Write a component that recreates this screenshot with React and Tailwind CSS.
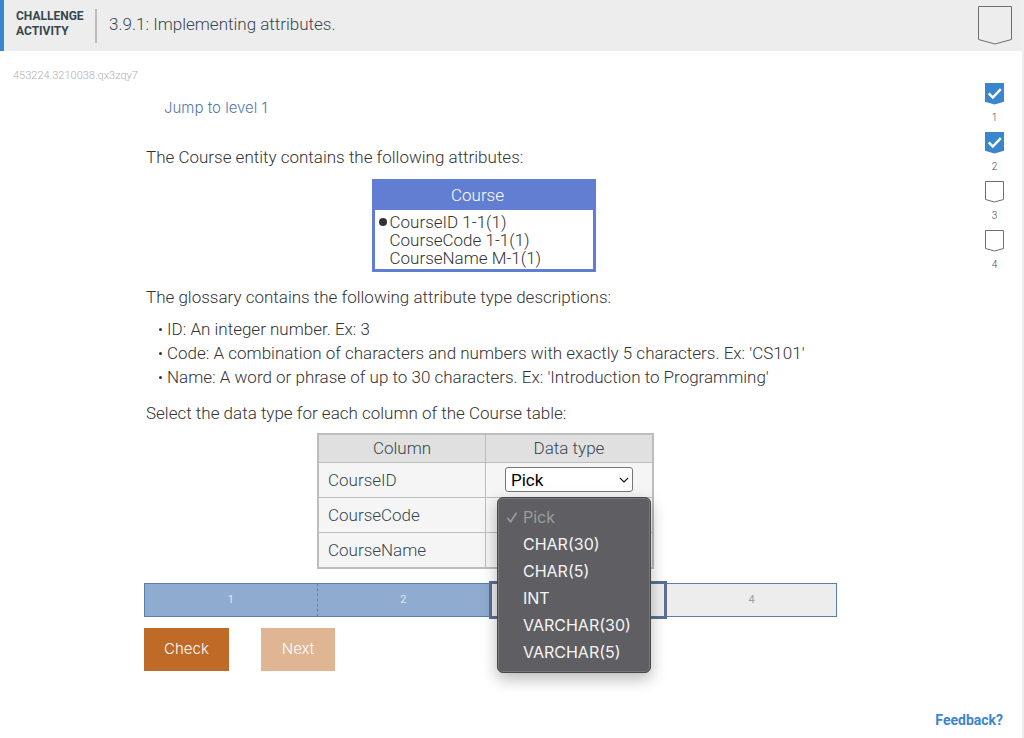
import React, { useState } from "react";

const OPTIONS = ["Pick", "CHAR(30)", "CHAR(5)", "INT", "VARCHAR(30)", "VARCHAR(5)"];
const COLUMNS = ["CourseID", "CourseCode", "CourseName"];
const LEVELS = [
  { level: 1, done: true },
  { level: 2, done: true },
  { level: 3, done: false },
  { level: 4, done: false },
];

function LevelBadge({ level, done }) {
  return (
    <li className="flex h-[49px] flex-col items-center">
      <svg width="19" height="23" viewBox="0 0 19 23" fill="none" aria-hidden="true">
        {done ? (
          <>
            <path d="M0 1h19v18.8L9.5 22.5 0 19.8z" fill="#3a86cc" />
            <path d="M3.8 11.4l4 4.2 8-8.4" stroke="#fff" strokeWidth="2.4" />
          </>
        ) : (
          <path d="M0.5 1.5h18v18L9.5 22l-9-2.5z" stroke="#6e6e6e" fill="#fff" />
        )}
      </svg>
      <span className="mt-[5px] text-[10px] leading-4 text-[#37474f]">{level}</span>
    </li>
  );
}

function TypeSelect({ id, value, onChange }) {
  return (
    <div className="relative mx-auto h-[25px] w-32">
      <select
        id={id}
        value={value}
        onChange={(e) => onChange(e.target.value)}
        className="block h-full w-full appearance-none rounded-[3px] border border-[#767676] bg-white pl-[5px] text-[17px] leading-5 font-normal text-black"
      >
        {OPTIONS.map((o) => (
          <option key={o}>{o}</option>
        ))}
      </select>
      <svg className="pointer-events-none absolute top-[9px] right-1" width="10" height="8" viewBox="0 0 10 8" fill="none" aria-hidden="true">
        <path d="M0.8 1.8L5 6l4.2-4.2" stroke="#111" strokeWidth="1.2" />
      </svg>
    </div>
  );
}

function OptionMenu({ value, onPick }) {
  return (
    <ul
      role="listbox"
      aria-label="Data type options"
      className="absolute top-[34px] left-[11px] z-10 w-[154px] rounded-md border border-[#48484a] bg-[#5f5f63] py-1.5 font-['Inter',sans-serif] text-base leading-5 shadow-[0_6px_16px_rgba(0,0,0,0.28)] inset-ring inset-ring-[#77777a]"
    >
      {OPTIONS.map((o) => {
        const selected = o === value;
        return (
          <li key={o} role="option" aria-selected={selected}>
            <button
              type="button"
              onClick={() => onPick(o)}
              className={
                selected
                  ? "flex h-[27px] w-full items-center pl-2 font-normal text-[#9c9c9f]"
                  : "flex h-[27px] w-full items-center pl-2 font-normal text-[#f5f5f5]"
              }
            >
              <span className="w-[17px]">
                {selected && (
                  <svg width="12" height="12" viewBox="0 0 12 12" fill="none" aria-hidden="true">
                    <path d="M1.8 7.4l2.8 3.4L10.2 2.2" stroke="currentColor" strokeWidth="1.6" strokeLinecap="round" strokeLinejoin="round" />
                  </svg>
                )}
              </span>
              {o}
            </button>
          </li>
        );
      })}
    </ul>
  );
}

export default function App() {
  const [types, setTypes] = useState({ CourseID: "Pick", CourseCode: "Pick", CourseName: "Pick" });
  const [open, setOpen] = useState(true);
  const setType = (c, v) => setTypes((t) => ({ ...t, [c]: v }));

  return (
    <div className="flex min-h-screen flex-col border-r-2 border-[#eeeeee] bg-white font-['Roboto',sans-serif] font-light text-[#333333]">
      <header className="flex h-[51px] items-center border-l-4 border-[#3a86cc] bg-[#ededed] pr-[9px] text-[#37474f]">
        <div className="w-[79px] pb-1 pl-3 text-xs leading-[15px] font-bold">
          CHALLENGE ACTIVITY
        </div>
        <div className="ml-3 h-[34px] w-0.5 bg-[#bdbdbd]" />
        <h1 className="ml-3 flex-1 pb-1 text-[17px] leading-6">3.9.1: Implementing attributes.</h1>
        <svg className="mb-0.5" width="36" height="40" viewBox="0 0 36 40" fill="none" aria-hidden="true">
          <path d="M1.5 1.5h33v33L18 39 1.5 34.5z" stroke="#6e6e6e" />
        </svg>
      </header>

      <div className="flex flex-1 justify-between">
        <main className="flex-1">
          <p className="pt-[17px] pl-[13px] text-[11px] leading-4 text-[#b0b0b0]">453224.3210038.qx3zqy7</p>
          <div className="ml-36 max-w-[693px]">
            <a href="#level-1" className="mt-3 ml-5 block w-fit font-['Inter',sans-serif] text-[15px] leading-6 text-[#5878a8]">
              Jump to level 1
            </a>

            <div className="mr-3 ml-0.5 text-[17px] leading-6">
              <p className="mt-[25px]">The Course entity contains the following attributes:</p>

              <div className="flex justify-center pt-2.5 pr-1">
                <section className="w-56 border-[3px] border-[#617ed3] bg-white">
                  <h2 className="h-7 bg-[#617ed3] pr-3 text-center leading-[26px] text-white">Course</h2>
                  <ul className="px-1 pt-[3px] pb-0.5 leading-[18px]">
                    {["CourseID 1-1(1)", "CourseCode 1-1(1)", "CourseName M-1(1)"].map((t, i) => (
                      <li key={t} className="flex items-center">
                        <span className="w-[11px]">
                          {i === 0 && <span className="block size-2 rounded-full bg-[#333333]" />}
                        </span>
                        {t}
                      </li>
                    ))}
                  </ul>
                </section>
              </div>

              <p className="mt-[13px]">The glossary contains the following attribute type descriptions:</p>
              <ul className="mt-2">
                {[
                  "ID: An integer number. Ex: 3",
                  "Code: A combination of characters and numbers with exactly 5 characters. Ex: 'CS101'",
                  "Name: A word or phrase of up to 30 characters. Ex: 'Introduction to Programming'",
                ].map((t) => (
                  <li key={t} className="flex items-center">
                    <span className="mr-[5px] ml-[13px] size-[3px] rounded-full bg-[#333333]" />
                    {t}
                  </li>
                ))}
              </ul>
              <p className="mt-3">Select the data type for each column of the Course table:</p>

              <table className="mx-auto mt-2 w-[337px] table-fixed border-collapse border-2 border-[#bdbdbd] bg-[#f5f5f5] text-[#37474f]">
                <thead>
                  <tr className="h-[28px] bg-[#e0e0e0]">
                    <th className="border border-[#bdbdbd] p-0 font-light">Column</th>
                    <th className="border border-[#bdbdbd] p-0 font-light">Data type</th>
                  </tr>
                </thead>
                <tbody>
                  {COLUMNS.map((c) => (
                    <tr key={c} className="h-[35px] last:h-9">
                      <td className="border border-[#bdbdbd] py-0 pr-0 pl-[9px]">
                        <label htmlFor={c}>{c}</label>
                      </td>
                      <td className="relative border border-[#bdbdbd] p-0">
                        <TypeSelect id={c} value={types[c]} onChange={(v) => setType(c, v)} />
                        {c === "CourseID" && open && (
                          <OptionMenu
                            value={types[c]}
                            onPick={(v) => {
                              setType(c, v);
                              setOpen(false);
                            }}
                          />
                        )}
                      </td>
                    </tr>
                  ))}
                </tbody>
              </table>
            </div>

            <ol className="mt-3 flex h-[38px] items-center text-[11px]">
              <li className="flex h-[34px] flex-1 items-center justify-center border border-r-0 border-[#5b7fae] bg-[#8fabd0] font-normal text-[#dfe8f3]">1</li>
              <li className="flex h-[34px] flex-1 items-center justify-center border border-r-0 border-[#5b7fae] bg-[#8fabd0] font-normal text-[#dfe8f3] [border-left-style:dashed]">2</li>
              <li className="flex h-[38px] w-[178px] items-center justify-center border-[3px] border-[#5b6e94] bg-[#ededed] font-normal text-[#9e9e9e]">3</li>
              <li className="flex h-[34px] w-[170px] items-center justify-center border border-l-0 border-[#5b7fae] bg-[#ededed] font-normal text-[#9e9e9e]">4</li>
            </ol>

            <div className="mt-[9px] flex gap-8 font-['Inter',sans-serif] text-[15px] font-light text-white">
              <button type="button" className="h-[43px] w-[85px] bg-[#c06a27]">Check</button>
              <button type="button" disabled className="h-[43px] w-[74px] bg-[#e0b594]">Next</button>
            </div>
          </div>
        </main>

        <aside className="flex flex-col items-end pr-[18px]">
          <ol className="mt-[31px]">
            {LEVELS.map((l) => (
              <LevelBadge key={l.level} {...l} />
            ))}
          </ol>
        </aside>
      </div>

      <footer className="flex justify-end pr-[19px] pb-2">
        <a href="#feedback" className="text-sm leading-5 font-bold text-[#3a86cc]">Feedback?</a>
      </footer>
    </div>
  );
}
